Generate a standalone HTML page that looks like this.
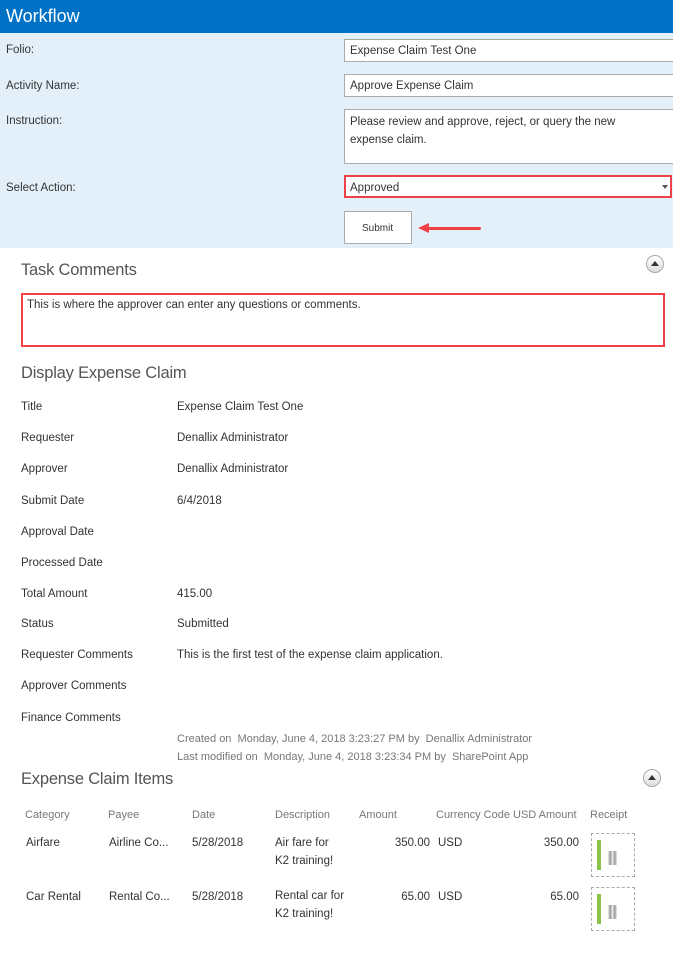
<!DOCTYPE html>
<html><head><meta charset="utf-8"><style>
*{margin:0;padding:0;box-sizing:border-box}
body{width:673px;height:958px;background:#fff;font-family:"Liberation Sans",sans-serif;font-size:11.5px;line-height:16px;color:#333;position:relative;overflow:hidden}
.a{position:absolute;white-space:nowrap}
.box{position:absolute;background:#fff;border:1px solid #ababab}
.h{position:absolute;font-size:16.5px;line-height:20px;color:#555;letter-spacing:-0.2px}
.g{color:#777;font-size:11px}
.col{position:absolute;width:18px;height:18px;border-radius:50%;border:1px solid #aaa;background:linear-gradient(#fff,#ddd)}
.col:after{content:"";position:absolute;left:4px;top:5px;border-left:4px solid transparent;border-right:4px solid transparent;border-bottom:5px solid #333}
.rc{position:absolute;width:44px;height:44px;border:1px dashed #aaa}
.rc i{position:absolute;left:5px;top:6px;width:4px;height:30px;background:#8bc34a}
.rc b{position:absolute;left:16px;top:17px;width:9px;height:14px;background:linear-gradient(90deg,#eee,#999,#eee,#999,#eee)}
</style></head><body>
<div class="a" style="left:0;top:0;width:673px;height:33px;background:#0072c6"></div>
<div class="a" style="left:6px;top:6px;color:#fff;font-size:18px;line-height:20px">Workflow</div>
<div class="a" style="left:0;top:33px;width:673px;height:215px;background:#e3f0fa"></div>
<div class="a" style="left:6px;top:42px">Folio:</div>
<div class="a" style="left:6px;top:78px">Activity Name:</div>
<div class="a" style="left:6px;top:113px">Instruction:</div>
<div class="a" style="left:6px;top:180px">Select Action:</div>
<div class="box" style="left:344px;top:39px;width:340px;height:23px"></div>
<div class="a" style="left:350px;top:43px">Expense Claim Test One</div>
<div class="box" style="left:344px;top:74px;width:340px;height:23px"></div>
<div class="a" style="left:350px;top:78px">Approve Expense Claim</div>
<div class="box" style="left:344px;top:109px;width:340px;height:55px"></div>
<div class="a" style="left:350px;top:113px;line-height:18px">Please review and approve, reject, or query the new<br>expense claim.</div>
<div class="box" style="left:344px;top:175px;width:328px;height:23px;border:2px solid #f04048"></div>
<div class="a" style="left:350px;top:180px">Approved</div>
<div class="a" style="left:662px;top:185px;border-left:3px solid transparent;border-right:3px solid transparent;border-top:4px solid #555"></div>
<div class="box" style="left:344px;top:211px;width:68px;height:33px"></div>
<div class="a" style="left:362px;top:221px;font-size:10px">Submit</div>
<div class="a" style="left:428px;top:227px;width:53px;height:3px;background:#f04048;border-radius:2px"></div>
<div class="a" style="left:418px;top:223px;border-top:5px solid transparent;border-bottom:5px solid transparent;border-right:11px solid #f04048"></div>

<div class="h" style="left:21px;top:260px">Task Comments</div>
<div class="col" style="left:646px;top:255px"></div>
<div class="a" style="left:21px;top:293px;width:644px;height:54px;border:2px solid #f04048"></div>
<div class="a" style="left:27px;top:297px">This is where the approver can enter any questions or comments.</div>

<div class="h" style="left:21px;top:363px">Display Expense Claim</div>
<div class="a" style="left:21px;top:399px">Title</div><div class="a" style="left:177px;top:399px">Expense Claim Test One</div>
<div class="a" style="left:21px;top:430px">Requester</div><div class="a" style="left:177px;top:430px">Denallix Administrator</div>
<div class="a" style="left:21px;top:461px">Approver</div><div class="a" style="left:177px;top:461px">Denallix Administrator</div>
<div class="a" style="left:21px;top:493px">Submit Date</div><div class="a" style="left:177px;top:493px">6/4/2018</div>
<div class="a" style="left:21px;top:524px">Approval Date</div>
<div class="a" style="left:21px;top:555px">Processed Date</div>
<div class="a" style="left:21px;top:586px">Total Amount</div><div class="a" style="left:177px;top:586px">415.00</div>
<div class="a" style="left:21px;top:616px">Status</div><div class="a" style="left:177px;top:616px">Submitted</div>
<div class="a" style="left:21px;top:647px">Requester Comments</div><div class="a" style="left:177px;top:647px">This is the first test of the expense claim application.</div>
<div class="a" style="left:21px;top:678px">Approver Comments</div>
<div class="a" style="left:21px;top:710px">Finance Comments</div>
<div class="a g" style="left:177px;top:731px">Created on &nbsp;Monday, June 4, 2018 3:23:27 PM by &nbsp;Denallix Administrator</div>
<div class="a g" style="left:177px;top:749px">Last modified on &nbsp;Monday, June 4, 2018 3:23:34 PM by &nbsp;SharePoint App</div>

<div class="h" style="left:21px;top:769px">Expense Claim Items</div>
<div class="col" style="left:643px;top:769px"></div>
<div class="a g" style="left:25px;top:807px">Category</div>
<div class="a g" style="left:108px;top:807px">Payee</div>
<div class="a g" style="left:192px;top:807px">Date</div>
<div class="a g" style="left:275px;top:807px">Description</div>
<div class="a g" style="left:359px;top:807px">Amount</div>
<div class="a g" style="left:436px;top:807px;width:74px;overflow:hidden">Currency Code</div>
<div class="a g" style="left:513px;top:807px">USD Amount</div>
<div class="a g" style="left:590px;top:807px">Receipt</div>

<div class="a" style="left:26px;top:835px">Airfare</div>
<div class="a" style="left:109px;top:835px">Airline Co...</div>
<div class="a" style="left:192px;top:835px">5/28/2018</div>
<div class="a" style="left:275px;top:834px;line-height:18px">Air fare for<br>K2 training!</div>
<div class="a" style="left:380px;top:835px;width:50px;text-align:right">350.00</div>
<div class="a" style="left:438px;top:835px">USD</div>
<div class="a" style="left:520px;top:835px;width:59px;text-align:right">350.00</div>
<div class="rc" style="left:591px;top:833px"><i></i><b></b></div>

<div class="a" style="left:26px;top:889px">Car Rental</div>
<div class="a" style="left:109px;top:889px">Rental Co...</div>
<div class="a" style="left:192px;top:889px">5/28/2018</div>
<div class="a" style="left:275px;top:887px;line-height:18px">Rental car for<br>K2 training!</div>
<div class="a" style="left:380px;top:889px;width:50px;text-align:right">65.00</div>
<div class="a" style="left:438px;top:889px">USD</div>
<div class="a" style="left:520px;top:889px;width:59px;text-align:right">65.00</div>
<div class="rc" style="left:591px;top:887px"><i></i><b></b></div>
</body></html>
